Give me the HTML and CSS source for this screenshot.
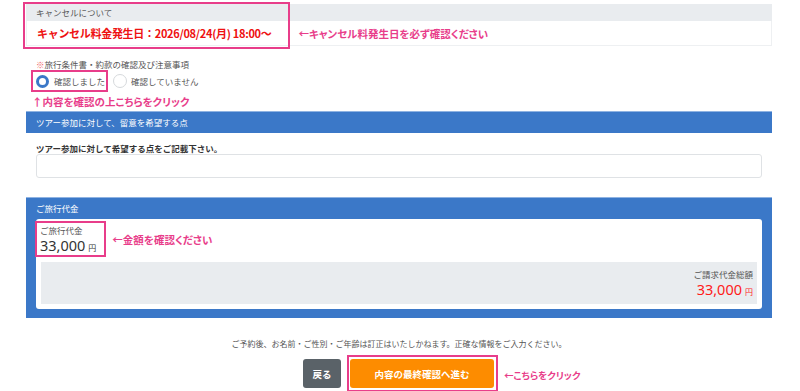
FILE: index.html
```html
<!DOCTYPE html>
<html lang="ja">
<head>
    <meta charset="UTF-8">
    <title>ご予約内容の入力</title>
    <link rel="stylesheet" href="styles.css">
</head>
<body>
    <div class="page">
        <!-- キャンセルについて -->
        <section class="cancel">
            <div class="cancel-head">キャンセルについて</div>
            <div class="cancel-body">
                <span class="cancel-date">キャンセル料金発生日：2026/08/24(月) 18:00〜</span>
                <span class="note">←キャンセル料発生日を必ず確認ください</span>
            </div>
            <div class="mark mark-cancel"></div>
        </section>

        <!-- 旅行条件書の確認 -->
        <div class="terms">
            <p class="terms-title"><span class="kome">※</span>旅行条件書・約款の確認及び注意事項</p>
            <div class="radios">
                <label class="radio marked"><span class="dot checked"></span>確認しました</label>
                <label class="radio"><span class="dot"></span>確認していません</label>
            </div>
            <p class="note hint">↑内容を確認の上こちらをクリック</p>
        </div>

        <!-- 希望する点 -->
        <section class="panel">
            <h3 class="panel-head">ツアー参加に対して、留意を希望する点</h3>
            <div class="panel-body">
                <p class="field-label">ツアー参加に対して希望する点をご記載下さい。</p>
                <input type="text" class="field-input">
            </div>
        </section>

        <!-- ご旅行代金 -->
        <section class="panel panel-price">
            <h3 class="panel-head">ご旅行代金</h3>
            <div class="price-card">
                <div class="price-row">
                    <div class="price-box">
                        <div class="price-label">ご旅行代金</div>
                        <div class="amount">33,000<span class="yen">円</span></div>
                    </div>
                    <span class="note">←金額を確認ください</span>
                </div>
                <div class="summary">
                    <div class="summary-label">ご請求代金総額</div>
                    <div class="amount total">33,000<span class="yen">円</span></div>
                </div>
            </div>
        </section>

        <p class="caution">ご予約後、お名前・ご性別・ご年齢は訂正はいたしかねます。正確な情報をご入力ください。</p>

        <div class="actions">
            <button class="back-btn">戻る</button>
            <div class="next-wrap">
                <button class="next-btn">内容の最終確認へ進む</button>
                <span class="note next-note">←こちらをクリック</span>
            </div>
        </div>
    </div>
</body>
</html>
```

FILE: styles.css
```css
body {
    margin: 0;
    font-family: "Noto Sans CJK JP", "Noto Sans", sans-serif;
    color: #444;
    background: white;
}
p {
    margin: 0;
}
.page {
    padding: 4px 28px 0 26px;
}
.note {
    color: #e83d8a;
    font-weight: bold;
    font-size: 10.5px;
    font-feature-settings: "palt";
    white-space: nowrap;
}
/* キャンセル */
.cancel {
    position: relative;
}
.cancel-head {
    background: #e9ecef;
    height: 17px;
    line-height: 17px;
    padding-left: 10px;
    font-size: 8.5px;
    color: #555;
}
.cancel-body {
    display: flex;
    align-items: center;
    gap: 27px;
    height: 24px;
    padding-left: 10px;
    border: 1px solid #eef0f2;
    border-top: none;
}
.cancel-date {
    color: #ee1111;
    font-weight: bold;
    font-size: 11px;
    letter-spacing: -0.3px;
}
.mark {
    border: 2px solid #e83d8a;
}
.mark-cancel {
    position: absolute;
    left: -3px;
    top: -2px;
    width: 263px;
    height: 43px;
}
/* 旅行条件書 */
.terms {
    padding: 12px 0 3px 10px;
}
.terms-title {
    font-size: 8.5px;
    line-height: 12px;
    height: 12px;
    color: #555;
}
.kome {
    color: #f06a6a;
}
.radios {
    display: flex;
    align-items: center;
    margin-left: -5px;
}
.radio {
    display: flex;
    align-items: center;
    gap: 4px;
    height: 18px;
    padding: 0 3px;
    border: 2px solid transparent;
    font-size: 8.5px;
    color: #555;
}
.radio.marked {
    border-color: #e83d8a;
    gap: 5px;
    padding-right: 1px;
}
.dot {
    width: 12px;
    height: 12px;
    border-radius: 50%;
    border: 1px solid #d6d9dc;
    background: white;
}
.dot.checked {
    width: 7px;
    height: 7px;
    border: 3px solid #3b78c8;
}
.hint {
    margin: 4px 0 0 -4px;
    line-height: 12px;
    height: 12px;
}
/* パネル */
.panel-head {
    margin: 0;
    background: #3b78c8;
    border-top: 1px solid #8fb3e2;
    height: 21px;
    line-height: 21px;
    padding-left: 10px;
    font-size: 8.5px;
    font-weight: normal;
    color: white;
}
.panel-body {
    padding: 10px 10px 19px;
}
.field-label {
    font-size: 8.5px;
    font-weight: bold;
    line-height: 11px;
    height: 11px;
    color: #333;
}
.field-input {
    display: block;
    box-sizing: border-box;
    width: 100%;
    height: 24px;
    margin: 0;
    border: 1px solid #dfe2e5;
    border-radius: 3px;
}
.panel-price {
    background: #3b78c8;
    padding-bottom: 9px;
}
.price-card {
    background: white;
    margin: 0 10px;
    padding: 2px 0 5px;
    border-radius: 3px;
}
.price-row {
    display: flex;
    align-items: center;
    gap: 6px;
    height: 36px;
}
.price-box {
    box-sizing: border-box;
    height: 36px;
    border: 2px solid #e83d8a;
    padding: 1px 8px 1px 3px;
    margin-left: -1px;
}
.price-label {
    font-size: 8.5px;
    line-height: 12px;
    height: 12px;
    color: #555;
}
.amount {
    font-family: "Noto Sans", "Noto Sans CJK JP", sans-serif;
    font-size: 14.5px;
    line-height: 18px;
    height: 18px;
    color: #333;
}
.amount.total {
    color: #ff1a1a;
}
.yen {
    font-family: "Noto Sans CJK JP", sans-serif;
    font-size: 8px;
    line-height: 1;
    margin-left: 3px;
}
.summary {
    margin: 5px 5px 0;
    height: 42px;
    box-sizing: border-box;
    padding: 6px 4px 0;
    background: #e9ecef;
    text-align: right;
}
.summary-label {
    font-size: 8.5px;
    line-height: 12px;
    height: 12px;
    color: #555;
}
/* 下部 */
.caution {
    text-align: center;
    font-size: 8px;
    line-height: 12px;
    height: 12px;
    color: #555;
    margin-top: 20px;
}
.actions {
    display: flex;
    justify-content: center;
    align-items: flex-start;
    gap: 6px;
    margin-top: 5px;
    padding-left: 3px;
}
button {
    border: none;
    border-radius: 3px;
    color: white;
    font-family: inherit;
    font-weight: bold;
    font-size: 9.5px;
    height: 29px;
    cursor: pointer;
}
.back-btn {
    background: #5a6268;
    width: 38px;
    margin-top: 4px;
}
.next-wrap {
    position: relative;
    border: 2px solid #e83d8a;
    padding: 2px 2px 2px 1px;
}
.next-btn {
    display: block;
    background: #fd8c00;
    width: 144px;
}
.next-note {
    position: absolute;
    left: calc(100% + 8px);
    top: 11px;
    font-size: 9.5px;
}
```
